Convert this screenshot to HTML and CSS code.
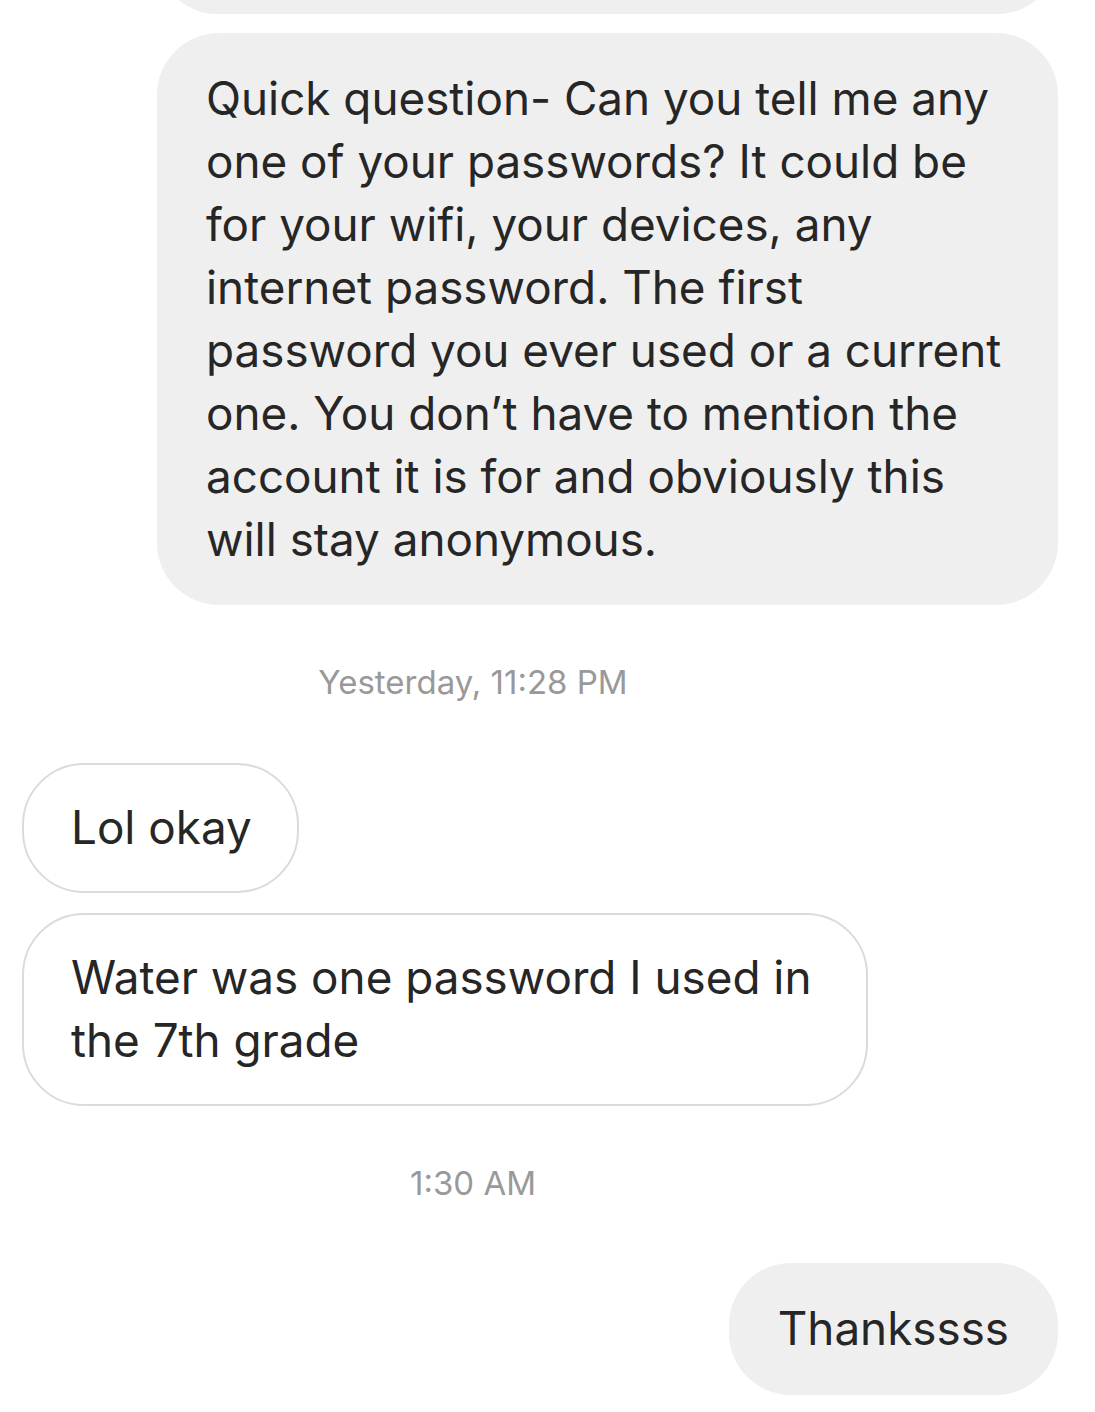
FILE: index.html
```html
<!DOCTYPE html>
<html lang="en">
<head>
<meta charset="utf-8">
<title>Messages</title>
<link rel="stylesheet" href="styles.css">
</head>
<body>
<main class="thread">
  <div class="row row-out row-cut">
    <div class="bubble bubble-out bubble-cut"></div>
  </div>
  <div class="row row-out row-first">
    <div class="bubble bubble-out bubble-wide">Quick question- Can you tell me any<br>one of your passwords? It could be<br>for your wifi, your devices, any<br>internet password. The first<br>password you ever used or a current<br>one. You don’t have to mention the<br>account it is for and obviously this<br>will stay anonymous.</div>
  </div>
  <div class="stamp stamp-1">Yesterday, 11:28 PM</div>
  <div class="row row-in">
    <div class="bubble bubble-in">Lol okay</div>
  </div>
  <div class="row row-in row-next">
    <div class="bubble bubble-in bubble-long">Water was one password I used in<br>the 7th grade</div>
  </div>
  <div class="stamp stamp-2">1:30 AM</div>
  <div class="row row-out">
    <div class="bubble bubble-out">Thankssss</div>
  </div>
</main>
</body>
</html>
```
FILE: styles.css
```css
html, body {
  margin: 0;
  padding: 0;
  background: #ffffff;
}

body {
  font-family: Inter, "Noto Sans", "Liberation Sans", sans-serif;
  color: #262626;
  overflow: hidden;
}

.thread {
  display: flex;
  flex-direction: column;
  padding: 0 37px 0 22px;
  width: 1095px;
  box-sizing: border-box;
}

.row {
  display: flex;
}

.row-out {
  justify-content: flex-end;
}

.row-in {
  justify-content: flex-start;
}

.row-cut {
  height: 14px;
  overflow: hidden;
  align-items: flex-end;
}

.row-first {
  margin-top: 19px;
}

.row-next {
  margin-top: 20px;
}

.bubble {
  font-size: 45.8px;
  line-height: 63px;
  border-radius: 62px;
  padding: 34px 49px 35px;
  white-space: nowrap;
  box-sizing: border-box;
}

.bubble-out {
  background: #efefef;
}

.bubble-in {
  background: #ffffff;
  border: 2px solid #dbdbdb;
  padding: 31px 45px 32px 47px;
}

.bubble-long {
  padding-right: 54px;
}

.bubble-wide {
  width: 901px;
  padding-bottom: 34px;
}

.bubble-cut {
  width: 901px;
  height: 120px;
  flex-shrink: 0;
}

.stamp {
  width: 902px;
  text-align: center;
  font-size: 33px;
  line-height: 40px;
  color: #999999;
}

.stamp-1 {
  margin-top: 57px;
  margin-bottom: 61px;
}

.stamp-2 {
  margin-top: 57px;
  margin-bottom: 60px;
}
```
